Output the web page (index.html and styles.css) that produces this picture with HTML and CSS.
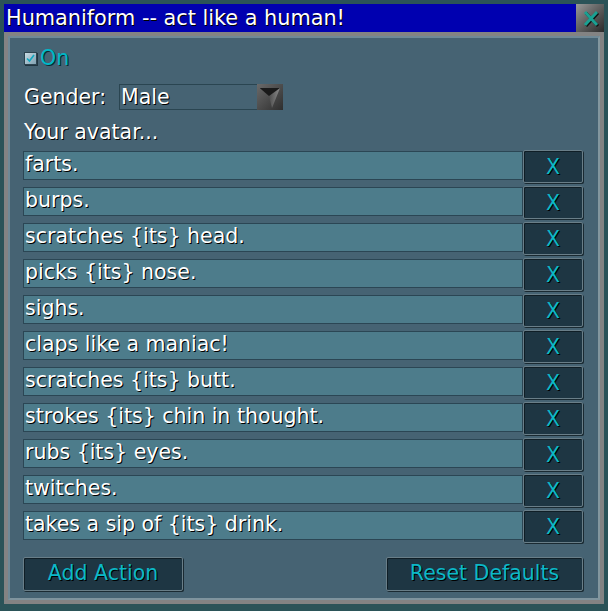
FILE: index.html
```html
<!DOCTYPE html>
<html>
<head>
<meta charset="utf-8">
<link rel="stylesheet" href="styles.css">
</head>
<body>
<div class="window">
  <div class="titlebar">
    <span class="title">Humaniform -- act like a human!</span>
    <div class="close">
      <svg width="28" height="28" viewBox="0 0 28 28">
        <path d="M9 8 L21 21 M21 8 L9 21" stroke="#111" stroke-width="3" transform="translate(1,1)"/>
        <path d="M9 8 L21 21 M21 8 L9 21" stroke="#1aa092" stroke-width="3"/>
      </svg>
    </div>
  </div>
  <div class="frame">
    <div class="panel">
      <div class="on-row">
        <span class="check">
          <svg width="13" height="13" viewBox="0 0 13 13">
            <path d="M3 6.5 L5.5 9 L10 3" stroke="#10a8c0" stroke-width="1.6" fill="none"/>
          </svg>
        </span>
        <span class="on-label">On</span>
      </div>
      <div class="gender-row">
        <span class="label">Gender:</span>
        <div class="select">
          <span class="select-value">Male</span>
          <span class="select-btn">
            <svg width="26" height="26" viewBox="0 0 26 26">
              <defs>
                <linearGradient id="g" x1="0" y1="0" x2="1" y2="1">
                  <stop offset="0" stop-color="#6a6a6a"/>
                  <stop offset="1" stop-color="#2e2e2e"/>
                </linearGradient>
                <linearGradient id="t" x1="0" y1="0" x2="1" y2="0">
                  <stop offset="0" stop-color="#1c1c1c"/>
                  <stop offset="1" stop-color="#8a8a8a"/>
                </linearGradient>
              </defs>
              <rect x="0" y="0" width="26" height="26" fill="url(#g)"/>
              <path d="M3 4 L23 4 L15 24 L12 12 Z" fill="url(#t)"/>
              <path d="M3 4 L23 4 L12 12 Z" fill="#1a1a1a"/>
            </svg>
          </span>
        </div>
      </div>
      <div class="avatar-label">Your avatar...</div>
      <div class="rows">
        <div class="row"><div class="field">farts.</div><div class="xbtn">X</div></div>
        <div class="row"><div class="field">burps.</div><div class="xbtn">X</div></div>
        <div class="row"><div class="field">scratches {its} head.</div><div class="xbtn">X</div></div>
        <div class="row"><div class="field">picks {its} nose.</div><div class="xbtn">X</div></div>
        <div class="row"><div class="field">sighs.</div><div class="xbtn">X</div></div>
        <div class="row"><div class="field">claps like a maniac!</div><div class="xbtn">X</div></div>
        <div class="row"><div class="field">scratches {its} butt.</div><div class="xbtn">X</div></div>
        <div class="row"><div class="field">strokes {its} chin in thought.</div><div class="xbtn">X</div></div>
        <div class="row"><div class="field">rubs {its} eyes.</div><div class="xbtn">X</div></div>
        <div class="row"><div class="field">twitches.</div><div class="xbtn">X</div></div>
        <div class="row"><div class="field">takes a sip of {its} drink.</div><div class="xbtn">X</div></div>
      </div>
      <div class="actions">
        <div class="btn add">Add Action</div>
        <div class="btn reset">Reset Defaults</div>
      </div>
    </div>
  </div>
</div>
</body>
</html>
```

FILE: styles.css
```css
html, body {
  margin: 0;
  padding: 0;
  background: #2b5358;
  font-family: "DejaVu Sans", Verdana, sans-serif;
}
.window {
  margin: 4px;
  width: 600px;
}
.titlebar {
  height: 28px;
  background: #0000b0;
  display: flex;
  align-items: center;
  justify-content: space-between;
}
.title {
  color: #fff;
  font-size: 20.8px;
  padding-left: 2px;
  text-shadow: 1px 1px 0 #000;
  line-height: 28px;
}
.close {
  width: 28px;
  height: 28px;
  background: linear-gradient(135deg, #9a9a9a 0%, #6a6a6a 40%, #2a2a2a 100%);
}
.close svg { display: block; }
.frame {
  background: #838383;
  padding: 4px;
}
.panel {
  background: #466373;
  border: 2px solid;
  border-color: #6f8996 #83979f #7f949e #6f8996;
  padding: 10px 15px 7px 13px;
  display: flex;
  flex-direction: column;
  color: #fff;
  font-size: 20.5px;
}
.on-row {
  height: 20px;
  display: flex;
  align-items: center;
  padding-left: 1px;
}
.check {
  width: 11px;
  height: 11px;
  border: 1px solid #2d4450;
  background: linear-gradient(135deg, #c8dce4, #7fa0b0);
  box-shadow: 1px 1px 0 #203540;
  display: inline-block;
  position: relative;
}
.check svg {
  position: absolute;
  left: -1px;
  top: -1px;
}
.on-label {
  color: #00b8c8;
  margin-left: 3px;
  text-shadow: 1px 1px 0 #0a2a30;
  line-height: 20px;
}
.gender-row {
  margin-top: 16px;
  height: 26px;
  display: flex;
  align-items: center;
}
.label {
  width: 95px;
  padding-left: 1px;
  text-shadow: 1px 1px 0 #000;
}
.select {
  width: 164px;
  height: 26px;
  box-sizing: border-box;
  border: 1px solid #2a4551;
  border-right: none;
  display: flex;
  align-items: center;
  justify-content: space-between;
}
.select-value {
  padding-left: 1px;
  text-shadow: 1px 1px 0 #000;
}
.select-btn {
  width: 26px;
  height: 26px;
  margin-top: -1px;
  margin-bottom: -1px;
}
.select-btn svg { display: block; }
.avatar-label {
  margin-top: 11px;
  height: 22px;
  line-height: 22px;
  padding-left: 1px;
  text-shadow: 1px 1px 0 #000;
}
.rows {
  margin-top: 7px;
  display: flex;
  flex-direction: column;
  gap: 3px;
}
.row {
  display: flex;
  align-items: flex-start;
  height: 33px;
}
.field {
  width: 500px;
  height: 29px;
  box-sizing: border-box;
  margin-top: 1px;
  background: #4d7c8b;
  border: 1px solid #2b4654;
  padding-left: 1px;
  line-height: 25px;
  text-shadow: 1px 1px 0 #000;
  white-space: nowrap;
}
.xbtn {
  width: 60px;
  height: 33px;
  box-sizing: border-box;
  background: #1e3643;
  border: 1px solid #697e88;
  border-radius: 2px;
  box-shadow: inset 1px 1px 0 #0f1e26, 1px 1px 0 #1a2a32;
  color: #0cb8c8;
  text-align: center;
  line-height: 33px;
  text-shadow: 1px 1px 0 #000;
}
.actions {
  margin-top: 14px;
  display: flex;
  justify-content: space-between;
}
.btn {
  height: 34px;
  box-sizing: border-box;
  background: #1e3643;
  border: 1px solid #697e88;
  border-radius: 2px;
  box-shadow: inset 1px 1px 0 #0f1e26, 1px 1px 0 #1a2a32;
  color: #0cb8c8;
  text-align: center;
  line-height: 30px;
  text-shadow: 1px 1px 0 #000;
}
.add { width: 160px; }
.reset { width: 197px; }
```
